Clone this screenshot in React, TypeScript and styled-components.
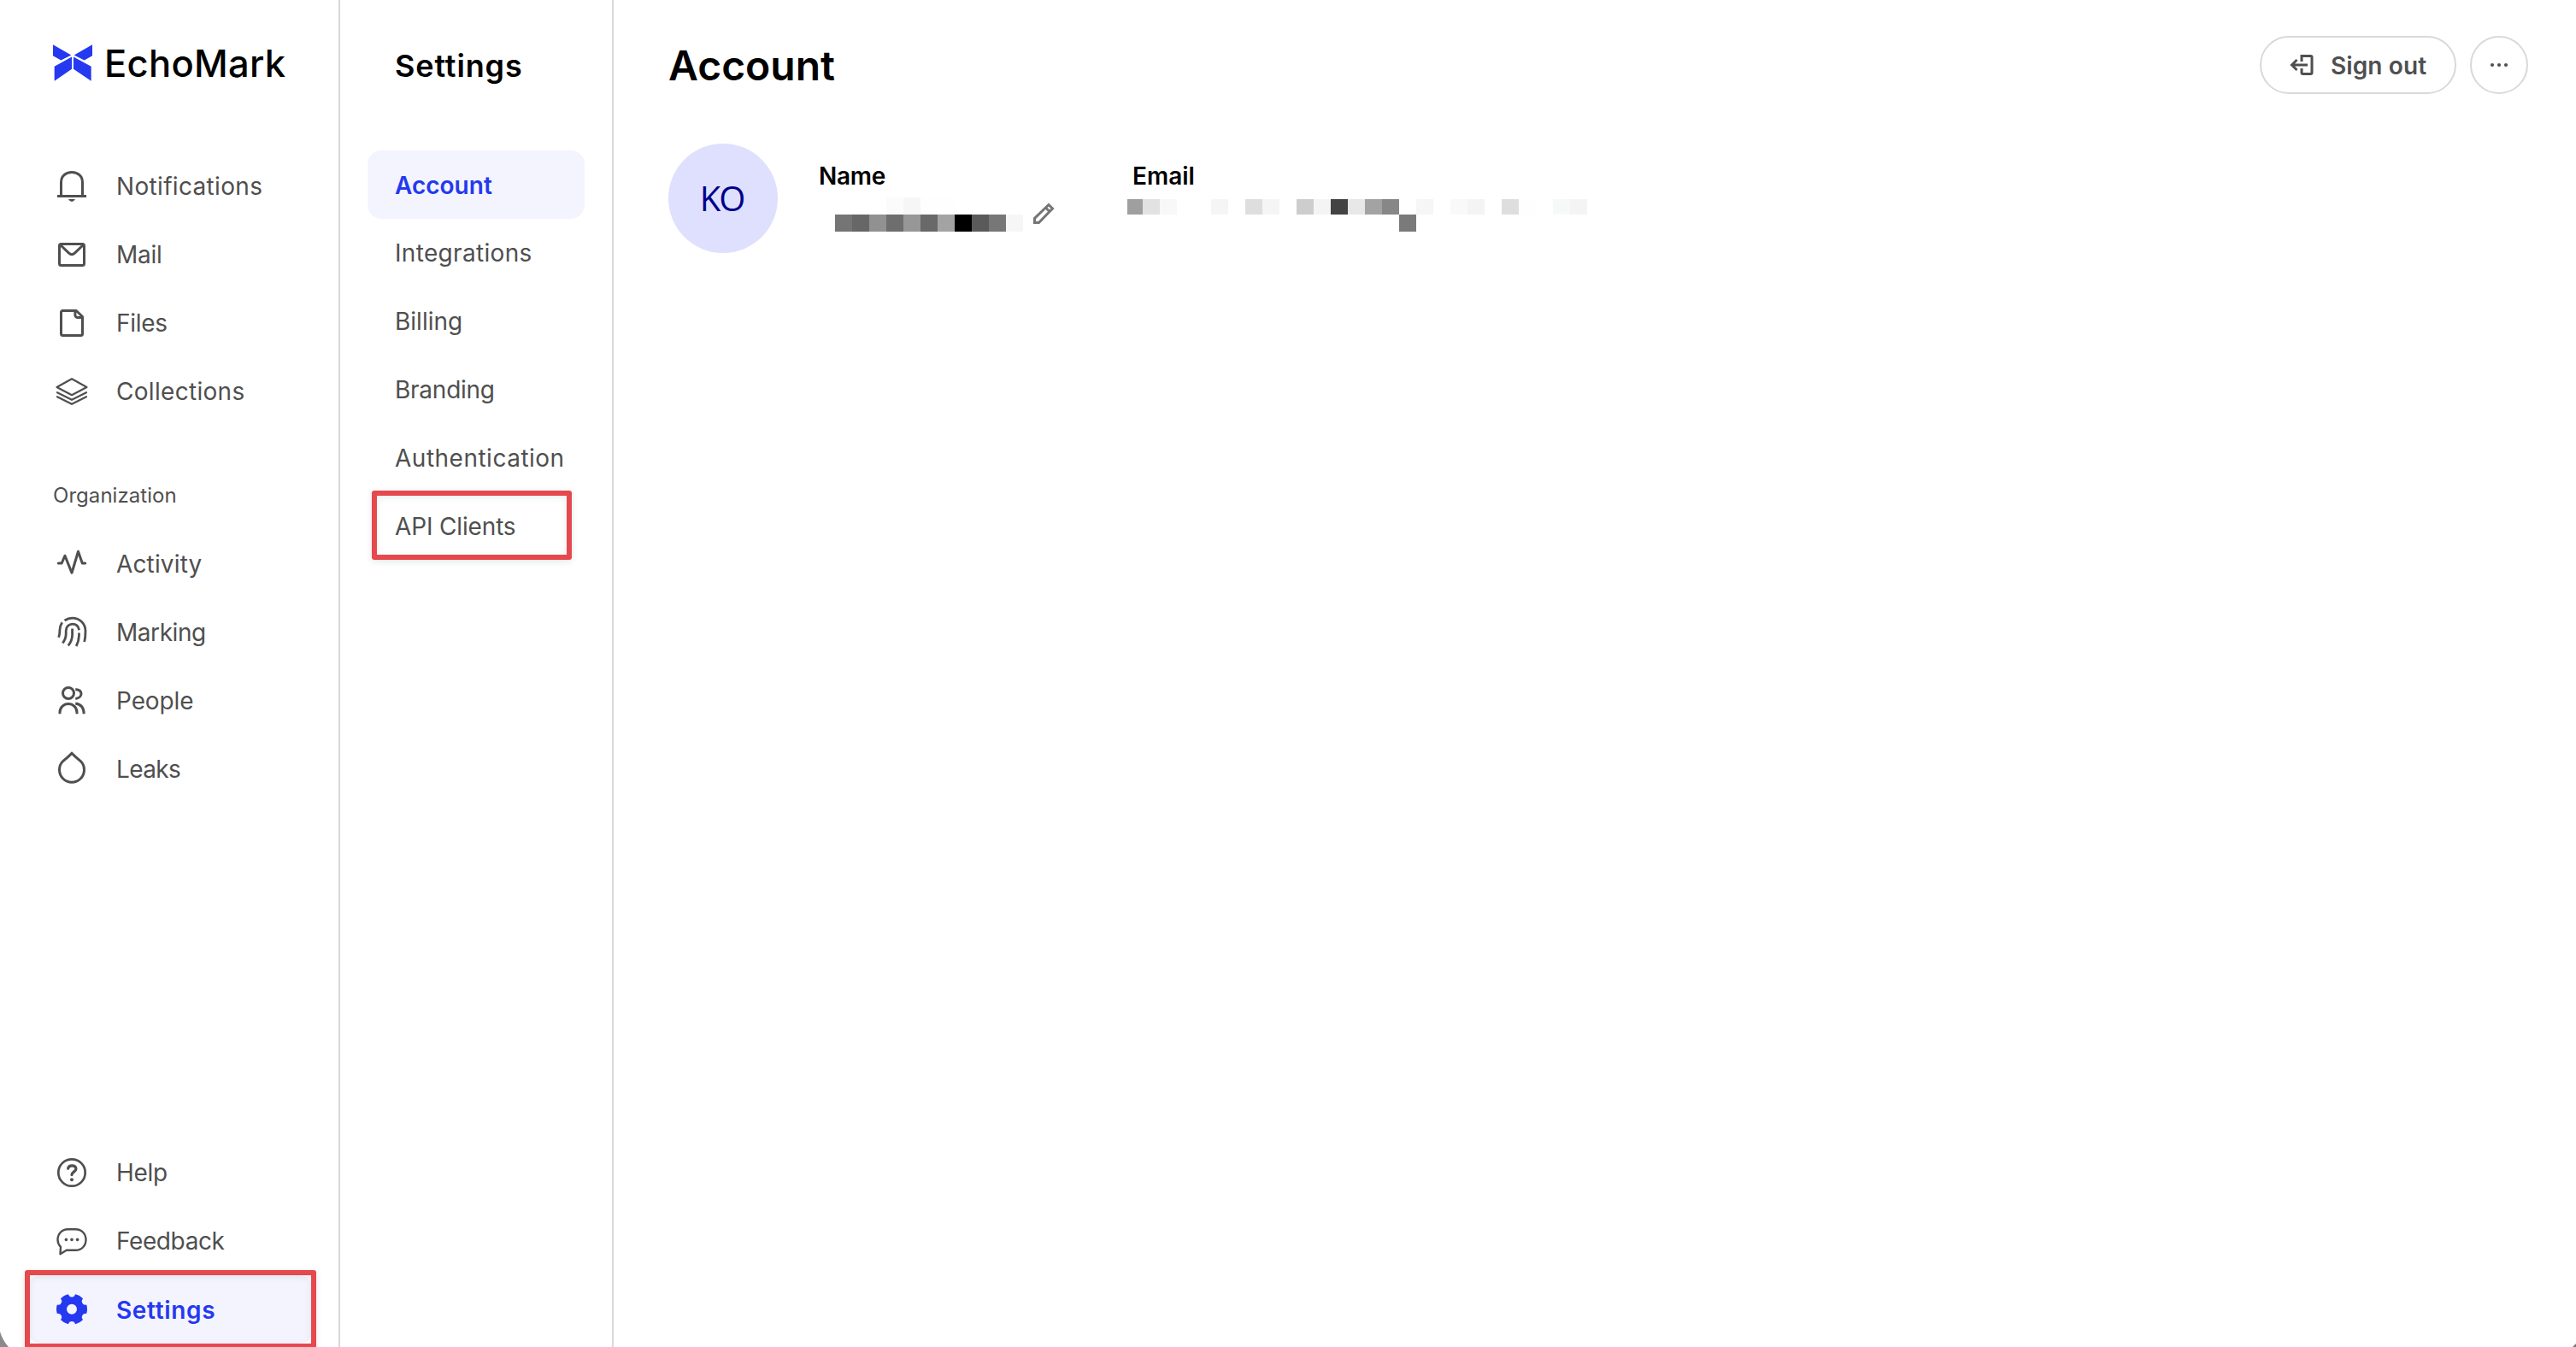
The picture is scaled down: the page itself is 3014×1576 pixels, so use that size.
import React from "react";
import styled, { createGlobalStyle } from "styled-components";

const Global = createGlobalStyle`
  * { box-sizing: border-box; }
  body { margin: 0; background: #fff; overflow: hidden; }
`;

const INK = "#4f4f4f";
const BLUE = "#2439f0";
const LINE = "#d9d9d9";
const RED = "#e5484d";

const Page = styled.div`
  position: relative;
  display: flex;
  width: 100%;
  height: 1576px;
  overflow: hidden;
  background: #fff;
  color: ${INK};
  font-family: Inter, "Liberation Sans", sans-serif;
  font-size: 28px;
`;

const Sidebar = styled.aside`
  display: flex;
  flex-direction: column;
  width: 398px;
  padding: 42px 30px 4px 32px;
  border-right: 2px solid ${LINE};
`;

const Brand = styled.div`
  display: flex;
  align-items: center;
  gap: 14px;
  height: 64px;
  margin: 0 0 72px 30px;
  color: #000;
`;

const BrandMark = styled.svg`
  flex: none;
  width: 46px;
  height: 43px;
  margin-bottom: 2px;
`;

const Label = styled.span<{ $fit?: number }>`
  letter-spacing: ${(p) => p.$fit ?? 0}px;
  white-space: nowrap;
`;

const BrandName = styled(Label)`
  font-size: 43.5px;
  font-weight: 500;
  line-height: 64px;
`;

const NavList = styled.nav`
  display: flex;
  flex-direction: column;
`;

const NavItem = styled.a<{ $active?: boolean }>`
  position: relative;
  display: flex;
  align-items: center;
  gap: 32px;
  height: 80px;
  padding-left: 32px;
  border-radius: 16px;
  line-height: ${(p) => (p.$active ? 82 : 80)}px;
  color: ${(p) => (p.$active ? BLUE : INK)};
  background: ${(p) => (p.$active ? "#f4f4ff" : "transparent")};
  font-weight: ${(p) => (p.$active ? 600 : 400)};

  & > span:first-of-type {
    padding-top: ${(p) => (p.$active ? 2 : 0)}px;
  }
`;

const SectionTitle = styled.div`
  height: 62px;
  margin: 52px 0 8px 30px;
  padding-top: 6px;
  font-size: 24px;
  line-height: 48px;
`;

const Spacer = styled.div`
  flex: 1;
`;

const Glyph = styled.svg`
  flex: none;
  width: 40px;
  height: 40px;
  overflow: visible;
  fill: none;
  stroke: currentColor;
  stroke-width: 3;
  stroke-linecap: round;
  stroke-linejoin: round;
`;

const SubPanel = styled.section`
  width: 320px;
  padding: 42px 32px 0;
  border-right: 2px solid ${LINE};
`;

const PanelTitle = styled.h2`
  margin: 0 0 66px 32px;
  height: 68px;
  font-size: 36px;
  font-weight: 600;
  line-height: 70px;
  color: #000;
`;

const SubItem = styled.a<{ $active?: boolean }>`
  position: relative;
  display: flex;
  align-items: center;
  height: 80px;
  padding: ${(p) => (p.$active ? 2 : 0)}px 0 0 32px;
  border-radius: 16px;
  color: ${(p) => (p.$active ? BLUE : INK)};
  background: ${(p) => (p.$active ? "#f4f4ff" : "transparent")};
  font-weight: ${(p) => (p.$active ? 600 : 400)};
`;

const Highlight = styled.span<{ $box: [number, number, number, number] }>`
  position: absolute;
  left: ${(p) => p.$box[0]}px;
  top: ${(p) => p.$box[1]}px;
  width: ${(p) => p.$box[2]}px;
  height: ${(p) => p.$box[3]}px;
  border: 6px solid ${RED};
  border-radius: 3px;
  box-shadow: 0 2px 8px rgba(0, 0, 0, 0.1), inset 0 2px 8px rgba(0, 0, 0, 0.08);
`;

const Main = styled.main`
  flex: 1;
  padding: 42px 56px 0 64px;
`;

const Header = styled.header`
  display: flex;
  align-items: center;
  gap: 16px;
  height: 68px;
`;

const Title = styled.h1`
  flex: 1;
  margin: 0;
  padding-top: 2px;
  font-size: 48px;
  font-weight: 600;
  line-height: 68px;
  color: #000;
`;

const Button = styled.button<{ $width: number }>`
  display: flex;
  align-items: center;
  width: ${(p) => p.$width}px;
  height: 68px;
  padding: 0;
  border: 2px solid ${LINE};
  border-radius: 34px;
  background: #fff;
  color: ${INK};
  font: 600 28px/34px Inter, "Liberation Sans", sans-serif;
`;

const ButtonText = styled(Label)`
  padding-top: 2px;
`;

const ButtonIcon = styled(Glyph)<{ $inset: number; $gap: number }>`
  margin: 0 ${(p) => p.$gap}px 0 ${(p) => p.$inset}px;
`;

const Profile = styled.section`
  display: flex;
  margin-top: 58px;
`;

const Avatar = styled.div`
  display: flex;
  align-items: center;
  justify-content: center;
  width: 128px;
  height: 128px;
  margin-right: 47px;
  padding: 0 3px 1px 0;
  border-radius: 50%;
  background: #dee0fd;
  color: #00008b;
  font-family: "Open Sans", "Noto Sans", sans-serif;
  font-size: 40px;
  font-weight: 400;
`;

const Field = styled.div<{ $width: number }>`
  width: ${(p) => p.$width}px;
  padding-top: 20px;
`;

const FieldName = styled.div`
  height: 43px;
  padding-left: 1px;
  font-weight: 600;
  line-height: 36px;
  color: #000;
`;

const Value = styled.div<{ $shift: number; $drop?: number }>`
  display: flex;
  margin-left: ${(p) => p.$shift}px;
  padding-top: ${(p) => p.$drop ?? 0}px;
`;

const Mosaic = styled.div<{ $cols: number; $lead: number; $first: number }>`
  display: grid;
  flex: none;
  grid-template-columns: ${(p) => p.$lead}px repeat(${(p) => p.$cols - 1}, 20px);
  grid-template-rows: ${(p) => p.$first}px 20px;
`;

const Cell = styled.i<{ $tone: string }>`
  background: ${(p) => p.$tone || "transparent"};
`;

const Pencil = styled(Glyph)`
  width: 26px;
  height: 26px;
  margin: 6px 0 0 11px;
  color: #757575;
`;

const CornerShade = styled.svg<{ $right?: boolean }>`
  position: absolute;
  bottom: 0;
  ${(p) => (p.$right ? "right: 0;" : "left: 0;")}
`;

const gearPath = (() => {
  const pt = (r: number, deg: number) => {
    const a = (deg * Math.PI) / 180;
    return `${(20 + r * Math.cos(a)).toFixed(2)} ${(19.8 + r * Math.sin(a)).toFixed(2)}`;
  };
  let d = "";
  for (let k = 0; k < 6; k++) {
    const c = k * 60;
    d += `${k ? "L" : "M"}${pt(15, c - 21)}L${pt(18, c - 16)}A18 18 0 0 1 ${pt(18, c + 16)}L${pt(15, c + 21)}A5 5 0 0 0 ${pt(15, c + 39)}`;
  }
  return d + "ZM26 19.8a6 6 0 1 0 -12 0a6 6 0 1 0 12 0Z";
})();

const icons: Record<string, React.ReactNode> = {
  bell: (
    <>
      <path strokeLinecap="butt" d="M7.500 31.500V15.500C7.500 8 13 3.500 20 3.500S32.500 8 32.500 15.500V31.500M3 31.500H37" />
      <path stroke="none" fill="currentColor" d="M16 35h8q-1.500 3-4 3t-4-3z" />
    </>
  ),
  mail: (
    <>
      <rect x="5.500" y="7.500" width="29" height="25" rx="2" />
      <path d="M6.500 8.500L16.600 18.200q3.400 3 6.800 0L33.500 8.500" />
    </>
  ),
  file: (
    <path d="M25.300 5.500H9.500a2 2 0 0 0-2 2v25a2 2 0 0 0 2 2h21a2 2 0 0 0 2-2V12.500ZM23.900 5.800v4.700a3 3 0 0 0 3 3h5.500" />
  ),
  layers: (
    <path strokeWidth="2.200" d="M20 5.300L37.500 15 20 24.200 2.500 15ZM3 21.200l17 8.600 17-8.600M3 26.200l17 8.600 17-8.600" />
  ),
  activity: <path d="M4.300 19H8.200L12 10.200 20 30.200 27.500 5.200 32.300 19H35.700" />,
  finger: (
    <path
      strokeLinecap="butt"
      strokeWidth="2.800"
      d="M8.700 8.200Q5.800 12.500 5.900 17.500T4.600 25.800M11.600 6C14.500 4 17.500 3.200 20.500 3.200C29.500 3.200 36 9.600 36 18.500C36 23.500 35.800 27 34.700 31M9.300 32.300Q13.200 27.500 13.200 21.500V18C13.200 13.200 16.600 10.200 20.800 10.200C25 10.200 27.800 12.800 28.600 17.200M20.600 15.400V22.500Q20.600 29.500 15.800 35.400M28.500 20.500V23.500Q28.300 30 25.200 36"
    />
  ),
  people: (
    <>
      <circle cx="16" cy="11" r="6.500" />
      <path strokeLinecap="butt" d="M6 35.200V33.500a10 10 0 0 1 20 0V35.200M24.300 6.400C28.500 6.800 31 8.800 31 11.700S28.500 17 24.300 17.400M24.300 23C30.500 24 34.200 28 34.200 35.200" />
    </>
  ),
  drop: <path strokeLinejoin="miter" d="M20 1.300L15.500 5.600 9.700 10.500A14.500 14.500 0 1 0 30.300 10.500L24.500 5.600Z" />,
  help: (
    <>
      <circle cx="20" cy="20" r="15.700" strokeWidth="2.700" />
      <path strokeWidth="3.200" d="M15.600 15.200C15.900 12.800 17.800 11.800 20.200 11.800C23 11.800 24.900 13.200 24.900 15.700C24.900 18.800 20 19 20 22.600" />
      <circle cx="20" cy="28.300" r="2" fill="currentColor" stroke="none" />
    </>
  ),
  chat: (
    <>
      <path strokeWidth="2.400" d="M7 26.800C4.800 24.600 3.500 21.700 3.500 18.500C3.500 11.500 8.500 6.200 15.500 6.200H24.500C31.500 6.200 36.500 11.500 36.500 18.500S31.500 30.800 24.500 30.800H13.800L6.500 35.200Z" />
      <g fill="currentColor" stroke="none">
        <circle cx="13.400" cy="18.400" r="1.800" />
        <circle cx="20" cy="18.400" r="1.800" />
        <circle cx="26.600" cy="18.400" r="1.800" />
      </g>
    </>
  ),
  gear: <path stroke="none" fill="currentColor" fillRule="evenodd" d={gearPath} />,
};

type Entry = { icon: string; text: string; fit?: number; active?: boolean };

const primary: Entry[] = [
  { icon: "bell", text: "Notifications", fit: 0.33 },
  { icon: "mail", text: "Mail", fit: -0.3 },
  { icon: "file", text: "Files", fit: -0.3 },
  { icon: "layers", text: "Collections", fit: 0.3 },
];
const organization: Entry[] = [
  { icon: "activity", text: "Activity", fit: 0.15 },
  { icon: "finger", text: "Marking", fit: -0.45 },
  { icon: "people", text: "People", fit: -0.1 },
  { icon: "drop", text: "Leaks", fit: -0.6 },
];
const support: Entry[] = [
  { icon: "help", text: "Help", fit: -0.3 },
  { icon: "chat", text: "Feedback", fit: -0.4 },
  { icon: "gear", text: "Settings", fit: 0.65, active: true },
];
const settings: { text: string; fit?: number; active?: boolean; marked?: boolean }[] = [
  { text: "Account", active: true },
  { text: "Integrations", fit: 0.33 },
  { text: "Billing" },
  { text: "Branding", fit: -0.25 },
  { text: "Authentication", fit: 0.5 },
  { text: "API Clients", fit: -0.15, marked: true },
];

const nameCells = [
  "", "", "", "#fbfbfb", "#f6f6f6", "#fefefe", "#fefefe", "", "", "", "",
  "#757575", "#676767", "#919191", "#6e6e6e", "#979797", "#696969", "#a3a3a3", "#000", "#5a5a5a", "#777", "#f6f6f6",
];
const emailCells = [
  "#9f9f9f", "#e2e2e2", "#f8f8f8", "", "", "#f5f5f5", "", "#dedede", "#f5f5f5", "",
  "#cdcdcd", "#f4f4f4", "#434343", "#e8e8e8", "#a3a3a3", "#878787", "", "#f6f6f6", "", "#f8faf9",
  "#f4f4f4", "", "#dedede", "#fefefe", "", "#f7f9f8", "#f4f4f4",
  ...Array(16).fill(""), "#7a7a7a",
];

function Nav({ items }: { items: Entry[] }) {
  return (
    <NavList>
      {items.map((it) => (
        <NavItem key={it.text} $active={it.active}>
          <Glyph viewBox="0 0 40 40">{icons[it.icon]}</Glyph>
          <Label $fit={it.fit}>{it.text}</Label>
          {it.active && <Highlight $box={[-3, -6, 341, 92]} />}
        </NavItem>
      ))}
    </NavList>
  );
}

export default function App() {
  return (
    <Page>
      <Global />
      <Sidebar>
        <Brand>
          <BrandMark viewBox="186 156 138 128" fill={BLUE}>
            <path d="M186 156L250 193 214 211 186 195ZM324 156L260 193 296 211 324 195ZM191 233L252 199V242L191 284ZM320 233L258 199V242L320 284Z" />
          </BrandMark>
          <BrandName $fit={0.3}>EchoMark</BrandName>
        </Brand>
        <Nav items={primary} />
        <SectionTitle>
          <Label $fit={0.05}>Organization</Label>
        </SectionTitle>
        <Nav items={organization} />
        <Spacer />
        <Nav items={support} />
      </Sidebar>
      <SubPanel>
        <PanelTitle>
          <Label $fit={0.85}>Settings</Label>
        </PanelTitle>
        {settings.map((it) => (
          <SubItem key={it.text} $active={it.active}>
            <Label $fit={it.fit}>{it.text}</Label>
            {it.marked && <Highlight $box={[5, -2, 234, 81]} />}
          </SubItem>
        ))}
      </SubPanel>
      <Main>
        <Header>
          <Title>
            <Label>Account</Label>
          </Title>
          <Button $width={230}>
            <ButtonIcon viewBox="0 0 40 40" $inset={26} $gap={15}>
              <path strokeLinecap="butt" strokeLinejoin="miter" d="M21 16V9.500Q21 9.500 22.500 9.500H31.500Q33 9.500 33 11V29Q33 30.500 31.500 30.500H22.500Q21 30.500 21 29V24M28 20H10M15.500 14L9.500 20 15.500 26" />
            </ButtonIcon>
            <ButtonText $fit={0.1}>Sign out</ButtonText>
          </Button>
          <Button $width={68}>
            <ButtonIcon viewBox="0 0 40 40" $inset={12} $gap={0}>
              <g fill="currentColor" stroke="none">
                <circle cx="12" cy="20" r="2.100" />
                <circle cx="20" cy="20" r="2.100" />
                <circle cx="28" cy="20" r="2.100" />
              </g>
            </ButtonIcon>
          </Button>
        </Header>
        <Profile>
          <Avatar>
            <Label $fit={-2}>KO</Label>
          </Avatar>
          <Field $width={367}>
            <FieldName>
              <Label $fit={-0.3}>Name</Label>
            </FieldName>
            <Value $shift={20}>
              <Mosaic $cols={11} $lead={20} $first={20}>
                {nameCells.map((c, i) => (
                  <Cell key={i} $tone={c} />
                ))}
              </Mosaic>
              <Pencil viewBox="0 0 26 26">
                <path strokeLinejoin="miter" d="M2.500 23.500V18.500L19 2.500 23.500 7 7.500 23.500ZM15.500 6L20 10.500" />
              </Pencil>
            </Value>
          </Field>
          <Field $width={600}>
            <FieldName>
              <Label>Email</Label>
            </FieldName>
            <Value $shift={-5} $drop={2}>
              <Mosaic $cols={27} $lead={18} $first={18}>
                {emailCells.map((c, i) => (
                  <Cell key={i} $tone={c} />
                ))}
              </Mosaic>
            </Value>
          </Field>
        </Profile>
      </Main>
      <CornerShade width="10" height="18" viewBox="0 0 10 18">
        <path d="M0 0Q3 10 10 18H0Z" fill="#8a8a8a" />
      </CornerShade>
      <CornerShade $right width="4" height="4" viewBox="0 0 4 4">
        <path d="M4 0V4H0Z" fill="#777" />
      </CornerShade>
    </Page>
  );
}
